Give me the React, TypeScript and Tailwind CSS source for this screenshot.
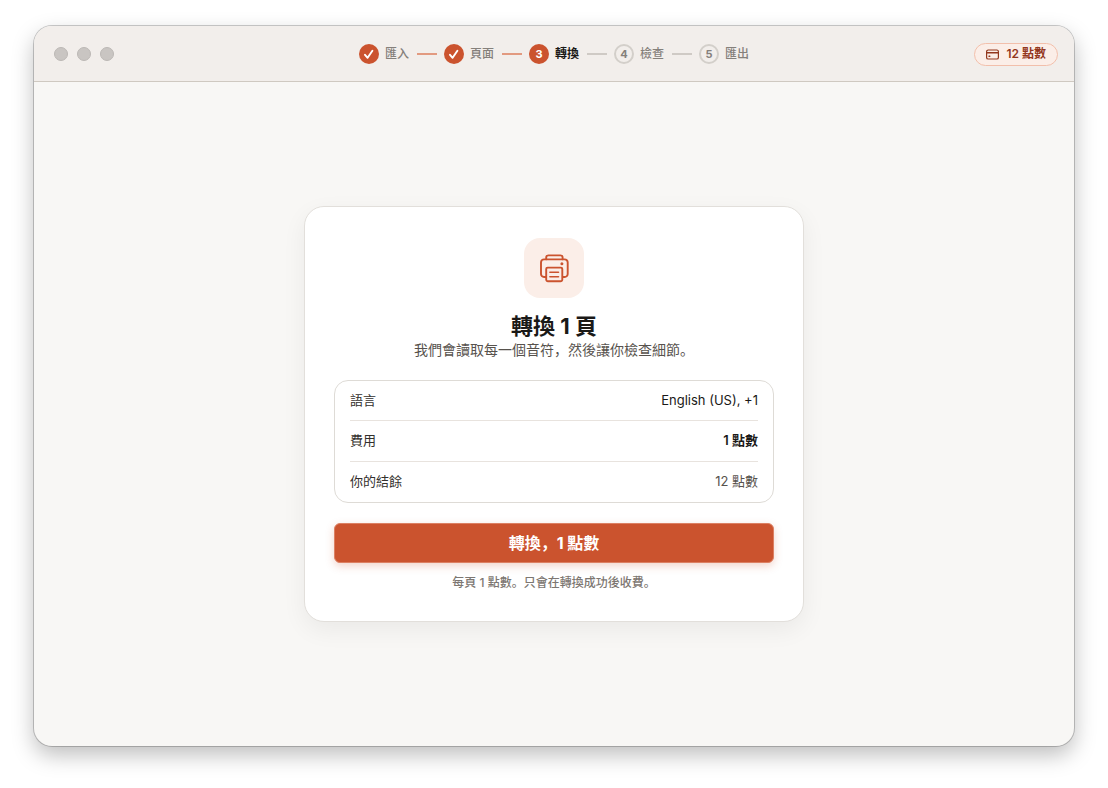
import React from "react";

type StepState = "done" | "current" | "todo";

type StepItem = {
  id: number;
  label: string;
  state: StepState;
};

const steps: StepItem[] = [
  { id: 1, label: "匯入", state: "done" },
  { id: 2, label: "頁面", state: "done" },
  { id: 3, label: "轉換", state: "current" },
  { id: 4, label: "檢查", state: "todo" },
  { id: 5, label: "匯出", state: "todo" },
];

const circleStyles: Record<StepState, string> = {
  done: "bg-[#cb532e] text-white",
  current: "bg-[#cb532e] text-white",
  todo: "border-2 border-[#d3cfca] text-[#85807b]",
};

const labelStyles: Record<StepState, string> = {
  done: "font-medium text-[#85807b]",
  current: "font-bold text-[#1a1917]",
  todo: "font-medium text-[#85807b]",
};

const CheckIcon = () => (
  <svg viewBox="0 0 20 20" className="size-5" fill="none" aria-hidden="true">
    <path
      d="M6 10.8 8.6 13.8 13.4 6.8"
      stroke="currentColor"
      strokeWidth="1.9"
      strokeLinecap="round"
      strokeLinejoin="round"
    />
  </svg>
);

const CardIcon = () => (
  <svg
    viewBox="0 0 13 11"
    className="h-[11px] w-[13px]"
    fill="none"
    stroke="currentColor"
    aria-hidden="true"
  >
    <rect x="0.6" y="1" width="11.8" height="9" rx="1.6" strokeWidth="1.2" />
    <path d="M0.6 3.8h11.8" strokeWidth="1.4" />
    <path d="M3 7.3h.8" strokeWidth="1.4" strokeLinecap="round" />
  </svg>
);

const PrinterIcon = () => (
  <svg
    viewBox="0 0 30 30"
    className="size-[30px]"
    fill="none"
    stroke="currentColor"
    strokeWidth="1.9"
    strokeLinecap="round"
    strokeLinejoin="round"
    aria-hidden="true"
  >
    <path d="M7.2 6.2V4.6a2.2 2.2 0 0 1 2.2-2.2h12a2.2 2.2 0 0 1 2.2 2.2v1.6" />
    <path d="M6.9 24H5a3 3 0 0 1-3-3V9.4a3 3 0 0 1 3-3h20.7a3 3 0 0 1 3 3V21a3 3 0 0 1-3 3h-1.9" />
    <path d="M7.2 16a1.4 1.4 0 0 1 1.4-1.4h13.3a1.4 1.4 0 0 1 1.4 1.4v10.5a1.8 1.8 0 0 1-1.8 1.8H9a1.8 1.8 0 0 1-1.8-1.8z" />
    <path d="M10.9 19.2h8.6M10.9 23.8h8.6" strokeWidth="1.6" />
    <circle cx="22.9" cy="10.8" r="1.5" fill="currentColor" stroke="none" />
  </svg>
);

const Stepper: React.FC = () => {
  return (
    <ol className="flex items-center">
      {steps.map((step, i) => (
        <li key={step.id} className="flex items-center text-xs">
          <span
            className={`mr-1.5 flex size-5 items-center justify-center rounded-full text-[11px] font-bold ${circleStyles[step.state]}`}
          >
            {step.state === "done" ? <CheckIcon /> : step.id}
          </span>
          <span className={labelStyles[step.state]}>{step.label}</span>
          {i < steps.length - 1 && (
            <span
              className={`mr-[7px] ml-2 h-0.5 w-5 ${step.state === "done" ? "bg-[#e29a80]" : "bg-[#cfcac5]"}`}
            />
          )}
        </li>
      ))}
    </ol>
  );
};

const App: React.FC = () => {
  return (
    <div
      lang="zh-Hans"
      className="flex min-h-screen bg-white px-[34px] pt-[26px] pb-[42px] font-['Inter','Noto_Sans_CJK_SC',sans-serif]"
    >
      <div className="flex flex-1 flex-col overflow-hidden rounded-[18px] bg-[#f8f7f5] shadow-[0_0_0_1px_rgba(0,0,0,0.2),0_9px_22px_rgba(0,0,0,0.26)]">
        <header className="grid h-14 grid-cols-[1fr_auto_1fr] items-center border-b border-[#cfc9c1] bg-[#f2eeeb] px-4 pt-px">
          <div className="flex gap-[9px] pl-1">
            <span className="size-3.5 rounded-full border border-[#bcb8b5] bg-[#c9c5c2]" />
            <span className="size-3.5 rounded-full border border-[#bcb8b5] bg-[#c9c5c2]" />
            <span className="size-3.5 rounded-full border border-[#bcb8b5] bg-[#c9c5c2]" />
          </div>
          <Stepper />
          <button
            type="button"
            className="flex h-[23px] items-center gap-[7px] justify-self-end rounded-full border border-[#f2bfab] bg-[#fbeee8] px-[11px] text-xs font-semibold text-[#93371d]"
          >
            <CardIcon />
            12 點數
          </button>
        </header>

        <main className="flex flex-1 items-center justify-center">
          <section className="flex w-full max-w-[500px] flex-col items-center rounded-[20px] border border-[#e2dfdb] bg-white px-[29px] pt-[31px] pb-[30px] shadow-[0_8px_24px_rgba(0,0,0,0.06)]">
            <div className="flex size-15 items-center justify-center rounded-2xl bg-[#fbeee8] text-[#cb532e]">
              <PrinterIcon />
            </div>
            <h1 className="mt-3 text-[22px] leading-8 font-bold text-[#1a1917]">
              轉換 1 頁
            </h1>
            <p className="text-sm leading-4 text-[#57524d]">
              我們會讀取每一個音符，然後讓你檢查細節。
            </p>

            <dl className="mt-[22px] w-full rounded-[14px] border border-[#dedbd6] px-[15px] text-[13px] text-[#1a1917]">
              <div className="flex h-10 items-center justify-between border-b border-[#e8e3de]">
                <dt className="text-[#33302d]">語言</dt>
                <dd>English (US), +1</dd>
              </div>
              <div className="flex h-[41px] items-center justify-between border-b border-[#e8e3de]">
                <dt className="text-[#33302d]">費用</dt>
                <dd className="font-semibold">1 點數</dd>
              </div>
              <div className="flex h-10 items-center justify-between">
                <dt className="text-[#33302d]">你的結餘</dt>
                <dd className="text-[#57524d]">12 點數</dd>
              </div>
            </dl>

            <button
              type="button"
              className="mt-5 h-10 w-full rounded-md border border-[#dc8063] bg-[#cb532e] text-base font-bold text-white shadow-[0_3px_8px_rgba(203,83,46,0.25)] hover:bg-[#b94826]"
            >
              轉換，1 點數
            </button>
            <p className="mt-3 text-xs leading-4 font-medium text-[#7d7772]">
              每頁 1 點數。只會在轉換成功後收費。
            </p>
          </section>
        </main>
      </div>
    </div>
  );
};

export default App;
